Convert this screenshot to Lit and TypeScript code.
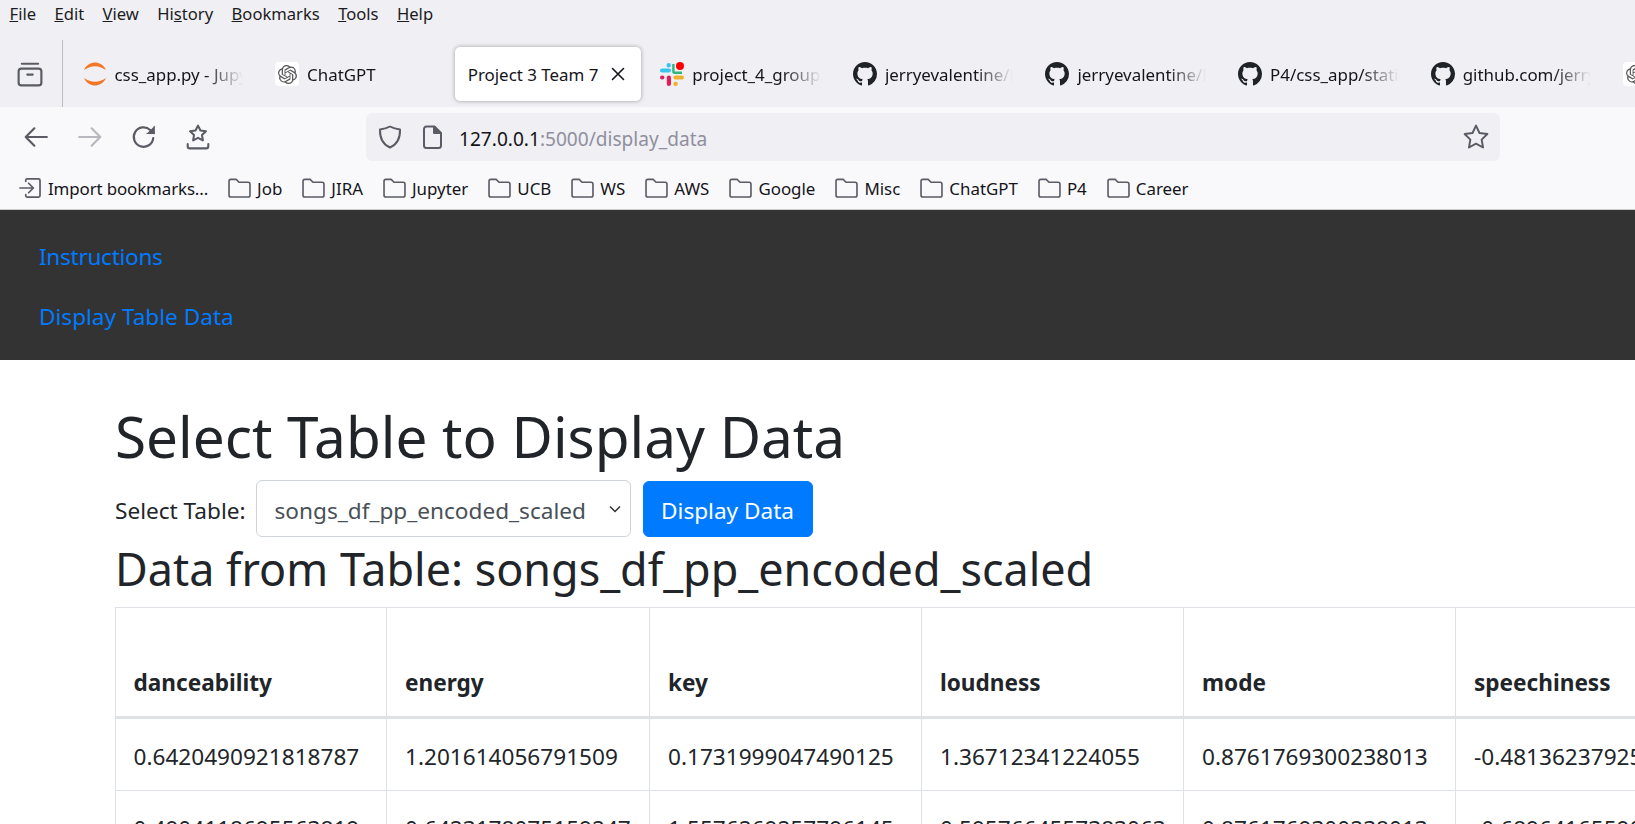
import { LitElement, html, css, svg } from 'lit';
import { customElement } from 'lit/decorators.js';

const GITHUB = svg`<path fill="#1f2328" d="M8 0C3.58 0 0 3.58 0 8c0 3.54 2.29 6.53 5.47 7.59.4.07.55-.17.55-.38 0-.19-.01-.82-.01-1.49-2.01.37-2.53-.49-2.69-.94-.09-.23-.48-.94-.82-1.13-.28-.15-.68-.52-.01-.53.63-.01 1.08.58 1.23.82.72 1.21 1.87.87 2.33.66.07-.52.28-.87.51-1.07-1.78-.2-3.64-.89-3.64-3.95 0-.87.31-1.59.82-2.15-.08-.2-.36-1.02.08-2.12 0 0 .67-.21 2.2.82.64-.18 1.32-.27 2-.27.68 0 1.36.09 2 .27 1.53-1.04 2.2-.82 2.2-.82.44 1.1.16 1.92.08 2.12.51.56.82 1.27.82 2.15 0 3.07-1.87 3.75-3.65 3.95.29.25.54.73.54 1.48 0 1.07-.01 1.93-.01 2.2 0 .21.15.46.55.38A8.013 8.013 0 0016 8c0-4.42-3.58-8-8-8z"/>`;

const OPENAI = 'M22.2819 9.8211a5.9847 5.9847 0 0 0-.5157-4.9108 6.0462 6.0462 0 0 0-6.5098-2.9A6.0651 6.0651 0 0 0 4.9807 4.1818a5.9847 5.9847 0 0 0-3.9977 2.9 6.0462 6.0462 0 0 0 .7427 7.0966 5.98 5.98 0 0 0 .511 4.9107 6.051 6.051 0 0 0 6.5146 2.9001A5.9847 5.9847 0 0 0 13.2599 24a6.0557 6.0557 0 0 0 5.7718-4.2058 5.9894 5.9894 0 0 0 3.9977-2.9001 6.0557 6.0557 0 0 0-.7475-7.0729zm-9.022 12.6081a4.4755 4.4755 0 0 1-2.8764-1.0408l.1419-.0804 4.7783-2.7582a.7948.7948 0 0 0 .3927-.6813v-6.7369l2.02 1.1686a.071.071 0 0 1 .038.052v5.5826a4.504 4.504 0 0 1-4.4945 4.4944zm-9.6607-4.1254a4.4708 4.4708 0 0 1-.5346-3.0137l.142.0852 4.783 2.7582a.7712.7712 0 0 0 .7806 0l5.8428-3.3685v2.3324a.0804.0804 0 0 1-.0332.0615L9.74 19.9502a4.4992 4.4992 0 0 1-6.1408-1.6464zM2.3408 7.8956a4.485 4.485 0 0 1 2.3655-1.9728V11.6a.7664.7664 0 0 0 .3879.6765l5.8144 3.3543-2.0201 1.1685a.0757.0757 0 0 1-.071 0l-4.8303-2.7865A4.504 4.504 0 0 1 2.3408 7.872zm16.5963 3.8558L13.1038 8.364 15.1192 7.2a.0757.0757 0 0 1 .071 0l4.8303 2.7913a4.4944 4.4944 0 0 1-.6765 8.1042v-5.6772a.79.79 0 0 0-.407-.667zm2.0107-3.0231l-.142-.0852-4.7735-2.7818a.7759.7759 0 0 0-.7854 0L9.409 9.2297V6.8974a.0662.0662 0 0 1 .0284-.0615l4.8303-2.7866a4.4992 4.4992 0 0 1 6.6802 4.66zM8.3065 12.863l-2.02-1.1638a.0804.0804 0 0 1-.038-.0567V6.0742a4.4992 4.4992 0 0 1 7.3757-3.4537l-.142.0805L8.704 5.459a.7948.7948 0 0 0-.3927.6813zm1.0976-2.3654l2.602-1.4998 2.6069 1.4998v2.9994l-2.5974 1.4997-2.6067-1.4997Z';

const jupyterIcon = html`<svg class="tab-icon" viewBox="0 0 24 24"><path fill="#f37726" d="M1 8C3.500 2.500 8 .5 12 .5S20.500 2.500 23 8C19 5.500 16 4.200 12 4.200S5 5.500 1 8zM1 16c2.500 5.500 7 7.500 11 7.500s8.500-2 11-7.500c-4 2.500-7 3.800-11 3.800S5 18.500 1 16z"/></svg>`;
const gptIcon = html`<span class="gpt-tile"><svg viewBox="0 0 24 24"><path fill="#555" d="${OPENAI}"/></svg></span>`;
const githubIcon = html`<svg class="tab-icon" viewBox="0 0 16 16">${GITHUB}</svg>`;
const slackIcon = html`<svg class="tab-icon" viewBox="0 0 24 24">
  <rect x="0" y="6.4" width="11" height="4.2" rx="2.1" fill="#36c5f0"/>
  <rect x="6.6" y="1" width="4.2" height="4.4" rx="2" fill="#36c5f0"/>
  <path d="M13.4 2v7.4a1.3 1.3 0 0 0 1.3 1.3H22" fill="none" stroke="#2eb67d" stroke-width="2.4"/>
  <circle cx="20" cy="4" r="4" fill="#ff0000"/>
  <rect x="0" y="13.4" width="4.4" height="4.2" rx="2" fill="#e01e5a"/>
  <rect x="6.8" y="13.4" width="4.2" height="10.6" rx="2.1" fill="#e01e5a"/>
  <rect x="13.4" y="13.4" width="10.6" height="4.2" rx="2.1" fill="#ecb22e"/>
  <rect x="13.4" y="19.8" width="4.4" height="4.2" rx="2" fill="#ecb22e"/>
</svg>`;

const TABS = [
  { icon: jupyterIcon, label: 'css_app.py - Jupyter' },
  { icon: gptIcon, label: 'ChatGPT' },
  { icon: null, label: 'Project 3 Team 7', active: true },
  { icon: slackIcon, label: 'project_4_group_channel' },
  { icon: githubIcon, label: 'jerryevalentine/Project_4' },
  { icon: githubIcon, label: 'jerryevalentine/Project_3' },
  { icon: githubIcon, label: 'P4/css_app/static/styles' },
  { icon: githubIcon, label: 'github.com/jerryevalentine' },
  { icon: gptIcon, label: 'ChatGPT' },
];

const MENUS: [string, string, string][] = [
  ['', 'F', 'ile'],
  ['', 'E', 'dit'],
  ['', 'V', 'iew'],
  ['Hi', 's', 'tory'],
  ['', 'B', 'ookmarks'],
  ['', 'T', 'ools'],
  ['', 'H', 'elp'],
];

const FOLDERS = ['Job', 'JIRA', 'Jupyter', 'UCB', 'WS', 'AWS', 'Google', 'Misc', 'ChatGPT', 'P4', 'Career'];

const COLUMNS = [
  { name: 'danceability', width: 271 },
  { name: 'energy', width: 263 },
  { name: 'key', width: 272 },
  { name: 'loudness', width: 262 },
  { name: 'mode', width: 272 },
  { name: 'speechiness', width: 300 },
];

const ROWS = [
  ['0.6420490921818787', '1.201614056791509', '0.1731999047490125', '1.36712341224055', '0.8761769300238013', '-0.4813623792519'],
  ['0.4904118695563819', '0.6423178075159247', '1.5576269257796145', '0.5957664557383063', '0.8761769300238013', '-0.6896416559012'],
];

@customElement('browser-chrome')
export class BrowserChrome extends LitElement {
  static styles = css`
    :host {
      display: block;
      font-family: 'Noto Sans', sans-serif;
      color: #15141a;
    }
    svg { display: block; flex: none; }
    .menubar {
      height: 26px;
      padding: 0 0 14px 9.5px;
      background: #f0f0f4;
      display: flex;
      align-items: center;
      gap: 18.4px;
      font-size: 16.6px;
      color: #1c1b22;
    }
    .tabstrip {
      height: 67px;
      background: #f0f0f4;
      display: flex;
      overflow: hidden;
    }
    .view-btn {
      width: 63px;
      flex: none;
      display: flex;
      align-items: center;
      justify-content: center;
      padding-right: 3px;
      box-sizing: border-box;
      border-right: 1px solid #bdbdc2;
    }
    .view-btn svg { width: 26px; height: 26px; }
    .tabs { display: flex; padding-left: 3.5px; }
    .tab {
      width: 192.6px;
      flex: none;
      box-sizing: border-box;
      padding: 7px 3px 6px;
    }
    .tab-inner {
      height: 54px;
      display: flex;
      align-items: center;
      gap: 8px;
      padding-left: 13px;
      padding-right: 13px;
      border-radius: 5px;
      font-size: 16.9px;
      box-sizing: border-box;
    }
    .tab.active .tab-inner {
      background: #fff;
      box-shadow: 0 0 4px rgba(0, 0, 0, 0.35);
      padding-right: 15px;
    }
    .tab-label {
      flex: 1;
      white-space: nowrap;
      overflow: hidden;
      -webkit-mask-image: linear-gradient(to left, transparent, #000 38px);
      mask-image: linear-gradient(to left, transparent, #000 38px);
    }
    .tab.active .tab-label { -webkit-mask-image: none; mask-image: none; }
    .tab-icon { width: 24px; height: 24px; flex: none; }
    .gpt-tile {
      width: 24px;
      height: 24px;
      flex: none;
      background: #fff;
      border-radius: 4px;
      display: flex;
      align-items: center;
      justify-content: center;
    }
    .gpt-tile svg { width: 19px; height: 19px; }
    .close { width: 16px; height: 16px; }
    .toolbar {
      height: 60px;
      background: #f9f9fb;
      display: flex;
      align-items: center;
      padding: 0 135px 0 23px;
      box-sizing: border-box;
    }
    .tool { width: 26px; height: 26px; margin-right: 28px; }
    .tool:nth-of-type(4) { margin-right: 0; }
    .urlbar {
      margin-left: 155px;
      flex: 1;
      height: 48px;
      background: #f0f0f4;
      border-radius: 6px;
      display: flex;
      align-items: center;
      padding: 0 11px 0 12px;
      box-sizing: border-box;
      font-size: 19.1px;
    }
    .urlbar .shield { width: 24px; height: 24px; }
    .urlbar .page { width: 22px; height: 24px; margin-left: 19px; }
    .url { margin-left: 16px; padding-top: 3px; flex: 1; color: #15141a; white-space: nowrap; }
    .url span { color: #8f8f9d; }
    .urlbar .star { width: 26px; height: 26px; }
    .bookmarks {
      height: 43px;
      background: #f9f9fb;
      border-bottom: 1px solid #ccc;
      box-sizing: border-box;
      display: flex;
      align-items: center;
      padding-left: 19px;
      gap: 20px;
      font-size: 16.9px;
    }
    .mark { display: flex; align-items: center; gap: 6px; white-space: nowrap; }
    .mark svg { width: 23px; height: 20px; }
    .mark.import span { letter-spacing: -0.12px; }
  `;

  render() {
    const stroke = '#5b5b66';
    return html`
      <div class="menubar">
        ${MENUS.map(([a, u, b]) => html`<span>${a}<u>${u}</u>${b}</span>`)}
      </div>
      <div class="tabstrip">
        <div class="view-btn">
          <svg viewBox="0 0 24 24" fill="none" stroke="${stroke}" stroke-width="2" stroke-linecap="round">
            <path d="M4.500 2.500h15"/>
            <rect x="1.500" y="7" width="21" height="15.500" rx="2.500"/>
            <path d="M9.500 12.500h5"/>
          </svg>
        </div>
        <div class="tabs">
          ${TABS.map(t => html`
            <div class="tab ${t.active ? 'active' : ''}">
              <div class="tab-inner">
                ${t.icon}
                <span class="tab-label">${t.label}</span>
                ${t.active ? html`
                  <svg class="close" viewBox="0 0 16 16" stroke="#15141a" stroke-width="1.6" stroke-linecap="round">
                    <path d="M2.500 2.500l11 11M13.500 2.500l-11 11"/>
                  </svg>` : null}
              </div>
            </div>`)}
        </div>
      </div>
      <div class="toolbar">
        <svg class="tool" viewBox="0 0 24 24" fill="none" stroke="${stroke}" stroke-width="2" stroke-linecap="round" stroke-linejoin="round">
          <path d="M22 12H2.500M10.500 4l-8 8 8 8"/>
        </svg>
        <svg class="tool" viewBox="0 0 24 24" fill="none" stroke="#b8b8bf" stroke-width="2" stroke-linecap="round" stroke-linejoin="round">
          <path d="M2 12h19.500M13.500 4l8 8-8 8"/>
        </svg>
        <svg class="tool" viewBox="0 0 24 24" fill="none" stroke="${stroke}" stroke-width="2" stroke-linecap="round" stroke-linejoin="round">
          <path d="M20.500 13a9 9 0 1 1-2.800-7.500L21 8.500"/>
          <path d="M21.500 2v6.800h-6.800" fill="${stroke}" stroke-width="1"/>
        </svg>
        <svg class="tool" viewBox="0 0 24 24" fill="none" stroke="${stroke}" stroke-width="1.900" stroke-linejoin="round" stroke-linecap="round">
          <path d="M12 1.500l2.300 4.500 5 .7-3.600 3.500.8 4.900-4.500-2.300-4.500 2.300.8-4.900-3.600-3.500 5-.7z"/>
          <path d="M2.500 18.500v2a2 2 0 0 0 2 2h15a2 2 0 0 0 2-2v-2"/>
        </svg>
        <div class="urlbar">
          <svg class="shield" viewBox="0 0 24 24" fill="none" stroke="${stroke}" stroke-width="2" stroke-linejoin="round">
            <path d="M12 1.500c3 1.700 6.200 2.600 10 3 .3 8.600-2.800 14.800-10 18-7.200-3.200-10.300-9.400-10-18 3.800-.4 7-1.300 10-3z"/>
          </svg>
          <svg class="page" viewBox="0 0 22 24" fill="none" stroke="${stroke}" stroke-width="2" stroke-linejoin="round">
            <path d="M3 4a2.500 2.500 0 0 1 2.500-2.500h8l6.500 6.500v12.500a2.500 2.500 0 0 1-2.500 2.500h-12a2.500 2.500 0 0 1-2.500-2.500z"/>
            <path d="M13 1.500v6.500h7" fill="${stroke}"/>
          </svg>
          <div class="url">127.0.0.1<span>:5000/display_data</span></div>
          <svg class="star" viewBox="0 0 24 24" fill="none" stroke="${stroke}" stroke-width="1.800" stroke-linejoin="round">
            <path d="M12 1.500l3.200 6.800 7.300 1-5.300 5.100 1.300 7.300-6.500-3.500-6.500 3.500 1.300-7.300L1.500 9.300l7.300-1z"/>
          </svg>
        </div>
      </div>
      <div class="bookmarks">
        <div class="mark import">
          <svg viewBox="0 0 24 21" fill="none" stroke="${stroke}" stroke-width="1.800" stroke-linecap="round" stroke-linejoin="round">
            <path d="M1 10.500h14M10 5.500l5 5-5 5"/>
            <path d="M7 3.500v-1a1.500 1.500 0 0 1 1.500-1.500h12a1.500 1.500 0 0 1 1.500 1.500v16a1.500 1.500 0 0 1-1.500 1.500h-12a1.500 1.500 0 0 1-1.500-1.500v-1"/>
          </svg>
          <span>Import bookmarks...</span>
        </div>
        ${FOLDERS.map(f => html`
          <div class="mark">
            <svg viewBox="0 0 24 21" fill="none" stroke="${stroke}" stroke-width="1.700" stroke-linejoin="round">
              <path d="M1 3.500a2 2 0 0 1 2-2h5.500l3 3H21a2 2 0 0 1 2 2v11.500a2 2 0 0 1-2 2H3a2 2 0 0 1-2-2z"/>
            </svg>
            <span>${f}</span>
          </div>`)}
      </div>
    `;
  }
}

@customElement('app-root')
export class AppRoot extends LitElement {
  static styles = css`
    :host {
      display: flex;
      flex-direction: column;
      height: 100vh;
      overflow: hidden;
      font-family: 'Noto Sans', sans-serif;
      color: #212529;
      background: #fff;
    }
    .site-nav {
      height: 150px;
      flex: none;
      background: #333;
      padding: 29px 0 0 39px;
      box-sizing: border-box;
      display: flex;
      flex-direction: column;
      gap: 24px;
    }
    .site-nav a {
      font-size: 22.6px;
      line-height: 36px;
      color: #007bff;
      text-decoration: none;
    }
    .site-nav a:first-child { letter-spacing: -0.3px; }
    main { padding: 40px 0 0 115px; }
    h1 {
      margin: 0 0 8px;
      font-size: 56.7px;
      line-height: 72px;
      font-weight: 400;
      white-space: nowrap;
    }
    .picker { display: flex; align-items: center; font-size: 22.6px; }
    .picker label { margin-right: 10px; padding-top: 3px; }
    select {
      appearance: none;
      -webkit-appearance: none;
      width: 375px;
      height: 57px;
      padding: 3px 12px 0 18px;
      font: inherit;
      color: #495057;
      background: #fff url("data:image/svg+xml,%3Csvg xmlns='http://www.w3.org/2000/svg' width='12' height='8'%3E%3Cpath d='M1 1.500l5 5 5-5' fill='none' stroke='%23333' stroke-width='1.500'/%3E%3C/svg%3E") no-repeat right 9px center;
      border: 1px solid #ced4da;
      border-radius: 6px;
      margin-right: 12px;
    }
    button {
      width: 170px;
      height: 56px;
      padding: 3px 0 0;
      font: inherit;
      color: #fff;
      background: #007bff;
      border: 1px solid #007bff;
      border-radius: 6px;
    }
    h2 {
      margin: 3px 0 9px;
      font-size: 44.9px;
      line-height: 58px;
      font-weight: 400;
      white-space: nowrap;
    }
    table {
      border-collapse: collapse;
      table-layout: fixed;
      font-size: 22.6px;
      line-height: 36px;
    }
    th, td {
      border: 1px solid #dee2e6;
      padding: 20px 18px 15px 18px;
      text-align: left;
      white-space: nowrap;
      overflow: hidden;
    }
    th:first-child, td:first-child { padding-left: 17.5px; }
    th {
      height: 73px;
      vertical-align: bottom;
      border-bottom: 3px solid #dee2e6;
      font-weight: 700;
    }
  `;

  render() {
    const total = COLUMNS.reduce((sum, c) => sum + c.width, 0);
    return html`
      <browser-chrome></browser-chrome>
      <nav class="site-nav">
        <a href="#">Instructions</a>
        <a href="#">Display Table Data</a>
      </nav>
      <main>
        <h1>Select Table to Display Data</h1>
        <div class="picker">
          <label for="table">Select Table:</label>
          <select id="table"><option>songs_df_pp_encoded_scaled</option></select>
          <button type="button">Display Data</button>
        </div>
        <h2>Data from Table: songs_df_pp_encoded_scaled</h2>
        <table style="width:${total}px">
          <colgroup>${COLUMNS.map(c => html`<col style="width:${c.width}px">`)}</colgroup>
          <thead><tr>${COLUMNS.map(c => html`<th>${c.name}</th>`)}</tr></thead>
          <tbody>
            ${ROWS.map(r => html`<tr>${r.map(v => html`<td>${v}</td>`)}</tr>`)}
          </tbody>
        </table>
      </main>
    `;
  }
}
